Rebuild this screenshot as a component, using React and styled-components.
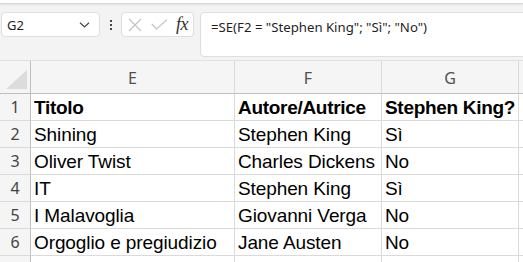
import React from 'react';
import styled, { createGlobalStyle } from 'styled-components';

const rows = [
    { n: 1, title: 'Titolo', author: 'Autore/Autrice', king: 'Stephen King?', head: true },
    { n: 2, title: 'Shining', author: 'Stephen King', king: 'Sì' },
    { n: 3, title: 'Oliver Twist', author: 'Charles Dickens', king: 'No' },
    { n: 4, title: 'IT', author: 'Stephen King', king: 'Sì' },
    { n: 5, title: 'I Malavoglia', author: 'Giovanni Verga', king: 'No' },
    { n: 6, title: 'Orgoglio e pregiudizio', author: 'Jane Austen', king: 'No' },
    { n: 7, title: '', author: '', king: '' },
];

function App() {
    return (
        <Page>
            <GlobalStyle />
            <TopStrip />
            <FormulaBar>
                <NameBox>
                    <span>G2</span>
                    <svg width="11" height="6" viewBox="0 0 11 6">
                        <path d="M1 0.8 L5.5 5 L10 0.8" fill="none" stroke="#444" strokeWidth="1.2" />
                    </svg>
                </NameBox>
                <Dots>
                    <i /><i /><i />
                </Dots>
                <ButtonBox>
                    <svg width="14" height="14" viewBox="0 0 14 14">
                        <path d="M1 1 L13 13 M13 1 L1 13" stroke="#c3c3c3" strokeWidth="1.2" />
                    </svg>
                    <svg width="17" height="11" viewBox="0 0 17 11">
                        <path d="M0.8 5 L5.5 10 L16 0.6" fill="none" stroke="#c3c3c3" strokeWidth="1.2" />
                    </svg>
                    <Fx>fx</Fx>
                </ButtonBox>
                <FormulaInput>=SE(F2 = "Stephen King"; "Sì"; "No")</FormulaInput>
            </FormulaBar>
            <Grid>
                <Corner>
                    <svg width="21" height="19" viewBox="0 0 21 19">
                        <path d="M0 19 L21 19 L21 0 Z" fill="#dcdcdc" />
                    </svg>
                </Corner>
                <ColHead>E</ColHead>
                <ColHead>F</ColHead>
                <ColHead>G</ColHead>
                <ColHead $last />
                {rows.map((r) => (
                    <React.Fragment key={r.n}>
                        <RowHead>{r.n}</RowHead>
                        <Cell $bold={r.head}>{r.title}</Cell>
                        <Cell $bold={r.head}>{r.author}</Cell>
                        <Cell $bold={r.head}>{r.king}</Cell>
                        <Cell $last />
                    </React.Fragment>
                ))}
            </Grid>
        </Page>
    );
}

const GlobalStyle = createGlobalStyle`
    html, body {
        margin: 0;
        padding: 0;
        background: #f3f3f3;
        overflow: hidden;
    }
`;

const Page = styled.div`
    width: 523px;
    height: 262px;
    overflow: hidden;
    background: #f3f3f3;
    font-family: "Noto Sans", "Open Sans", sans-serif;
`;

const TopStrip = styled.div`
    height: 3px;
    background: #ffffff;
    border-bottom: 1px solid #d9d9d9;
    box-shadow: 0 1px 2px rgba(0, 0, 0, 0.08);
`;

const FormulaBar = styled.div`
    display: flex;
    align-items: flex-start;
    height: 54px;
    padding: 8px 0 0 1px;
    box-sizing: border-box;
`;

const NameBox = styled.div`
    width: 99px;
    height: 25px;
    box-sizing: border-box;
    background: #fff;
    border: 1px solid #dedede;
    border-radius: 4px;
    display: flex;
    align-items: center;
    justify-content: space-between;
    padding: 0 9px 0 5px;
    font-size: 13px;
    color: #1f1f1f;
`;

const Dots = styled.div`
    width: 21px;
    height: 25px;
    display: flex;
    flex-direction: column;
    align-items: center;
    justify-content: center;
    gap: 2px;

    i {
        width: 2px;
        height: 2px;
        background: #444;
    }
`;

const ButtonBox = styled.div`
    width: 73px;
    height: 25px;
    box-sizing: border-box;
    background: #fff;
    border: 1px solid #dedede;
    border-radius: 4px;
    display: flex;
    align-items: center;
    padding: 0 0 0 6px;
    gap: 9px;
`;

const Fx = styled.span`
    font-family: "Liberation Serif", serif;
    font-style: italic;
    font-size: 18px;
    color: #333;
    margin-left: -1px;
    letter-spacing: -0.5px;
`;

const FormulaInput = styled.div`
    flex: 1;
    height: 45px;
    margin-left: 6px;
    margin-right: -6px;
    box-sizing: border-box;
    background: #fff;
    border: 1px solid #dedede;
    border-radius: 4px;
    padding: 5px 0 0 10px;
    font-size: 13.2px;
    color: #1f1f1f;
    white-space: nowrap;
`;

const Grid = styled.div`
    display: grid;
    grid-template-columns: 31px 204px 147px 137px 1fr;
    grid-template-rows: 33px repeat(7, 27px);
    margin-top: 2px;
    border-top: 1px solid #e0e0e0;
    background: #fff;
`;

const Corner = styled.div`
    background: #f5f5f5;
    border-right: 1px solid #bfbfbf;
    border-bottom: 1px solid #bfbfbf;
    display: flex;
    align-items: flex-end;
    justify-content: flex-end;
    padding: 0 3px 4px 0;
`;

const ColHead = styled.div`
    background: #f5f5f5;
    border-right: ${(p) => (p.$last ? 'none' : '1px solid #dadada')};
    border-bottom: 1px solid #bfbfbf;
    display: flex;
    align-items: center;
    justify-content: center;
    padding-top: 2px;
    font-size: 16px;
    color: #505050;
`;

const RowHead = styled.div`
    background: #f5f5f5;
    border-right: 1px solid #bfbfbf;
    border-bottom: 1px solid #dadada;
    display: flex;
    align-items: center;
    justify-content: center;
    font-size: 16px;
    color: #444;
`;

const Cell = styled.div`
    border-right: ${(p) => (p.$last ? 'none' : '1px solid #dadada')};
    border-bottom: 1px solid #dadada;
    display: flex;
    align-items: flex-end;
    padding: 0 0 1px 3px;
    font-family: "Liberation Sans", Arial, sans-serif;
    font-size: 19px;
    font-weight: ${(p) => (p.$bold ? 700 : 400)};
    letter-spacing: ${(p) => (p.$bold ? '-0.3px' : '-0.1px')};
    color: #000;
    white-space: nowrap;
    overflow: hidden;
`;

export default App;
